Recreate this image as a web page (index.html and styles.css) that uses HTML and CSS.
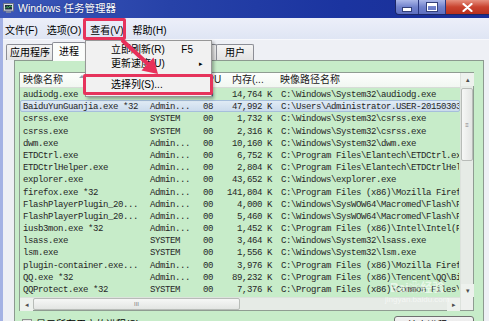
FILE: index.html
```html
<!DOCTYPE html>
<html lang="zh-CN">
<head>
    <meta charset="UTF-8">
    <meta name="viewport" content="width=device-width, initial-scale=1.0">
    <title>Windows 任务管理器</title>
    <link rel="stylesheet" href="styles.css">
</head>
<body>

<div class="window">
    <!-- Title bar -->
    <div class="titlebar">
        <svg class="app-icon" width="11" height="10" viewBox="0 0 11 10">
            <rect x="0.5" y="0.5" width="10" height="7.5" fill="#d9dde6" stroke="#6b7385"/>
            <rect x="2" y="2" width="7" height="4.5" fill="#1d2b3c"/>
            <polyline points="2,5.5 4,3.5 5.5,4.8 7,2.8 9,4" fill="none" stroke="#4fd45a" stroke-width="0.9"/>
            <rect x="3" y="8.3" width="5" height="1.5" fill="#8890a0"/>
        </svg>
        <span class="title">Windows 任务管理器</span>
        <div class="controls">
            <span class="ctl min"><i></i></span>
            <span class="ctl max"><i></i></span>
            <span class="ctl close">
                <svg width="11" height="9" viewBox="0 0 11 9">
                    <path d="M1.5 1 L9.5 8 M9.5 1 L1.5 8" stroke="#fff" stroke-width="2.2" stroke-linecap="round"/>
                </svg>
            </span>
        </div>
    </div>

    <div class="frame">
        <!-- Menu bar -->
        <div class="menubar">
            <span class="menu-item">文件(F)</span>
            <span class="menu-item">选项(O)</span>
            <span class="menu-item open">查看(V)</span>
            <span class="menu-item">帮助(H)</span>
        </div>

        <!-- Tabs -->
        <div class="tabs">
            <span class="tab">应用程序</span>
            <span class="tab active">进程</span>
            <span class="tab">服务</span>
            <span class="tab">性能</span>
            <span class="tab">联网</span>
            <span class="tab">用户</span>
        </div>

        <!-- Processes page -->
        <div class="page">
            <div class="list">
                <div class="list-main">
                    <div class="list-view">
                        <div class="row head">
                            <span class="c-name">映像名称<b class="sort"></b></span>
                            <span class="c-user">用户名</span>
                            <span class="c-cpu">CPU</span>
                            <span class="c-mem head-mem">内存(...</span>
                            <span class="c-path">映像路径名称</span>
                        </div>
                        <div class="row"><span class="c-name">audiodg.exe</span><span class="c-user">LOCAL...</span><span class="c-cpu">00</span><span class="c-mem">14,764 K</span><span class="c-path">C:\Windows\System32\audiodg.exe</span></div>
                        <div class="row selected"><span class="c-name">BaiduYunGuanjia.exe *32</span><span class="c-user">Admin...</span><span class="c-cpu">08</span><span class="c-mem">47,992 K</span><span class="c-path">C:\Users\Administrator.USER-20150303VQ\AppData</span></div>
                        <div class="row"><span class="c-name">csrss.exe</span><span class="c-user">SYSTEM</span><span class="c-cpu">00</span><span class="c-mem">1,732 K</span><span class="c-path">C:\Windows\System32\csrss.exe</span></div>
                        <div class="row"><span class="c-name">csrss.exe</span><span class="c-user">SYSTEM</span><span class="c-cpu">00</span><span class="c-mem">2,316 K</span><span class="c-path">C:\Windows\System32\csrss.exe</span></div>
                        <div class="row"><span class="c-name">dwm.exe</span><span class="c-user">Admin...</span><span class="c-cpu">00</span><span class="c-mem">10,160 K</span><span class="c-path">C:\Windows\System32\dwm.exe</span></div>
                        <div class="row"><span class="c-name">ETDCtrl.exe</span><span class="c-user">Admin...</span><span class="c-cpu">00</span><span class="c-mem">6,752 K</span><span class="c-path">C:\Program Files\Elantech\ETDCtrl.exe</span></div>
                        <div class="row"><span class="c-name">ETDCtrlHelper.exe</span><span class="c-user">Admin...</span><span class="c-cpu">00</span><span class="c-mem">2,804 K</span><span class="c-path">C:\Program Files\Elantech\ETDCtrlHelper.exe</span></div>
                        <div class="row"><span class="c-name">explorer.exe</span><span class="c-user">Admin...</span><span class="c-cpu">00</span><span class="c-mem">43,652 K</span><span class="c-path">C:\Windows\explorer.exe</span></div>
                        <div class="row"><span class="c-name">firefox.exe *32</span><span class="c-user">Admin...</span><span class="c-cpu">00</span><span class="c-mem">141,804 K</span><span class="c-path">C:\Program Files (x86)\Mozilla Firefox\firefox.exe</span></div>
                        <div class="row"><span class="c-name">FlashPlayerPlugin_20...</span><span class="c-user">Admin...</span><span class="c-cpu">00</span><span class="c-mem">4,000 K</span><span class="c-path">C:\Windows\SysWOW64\Macromed\Flash\FlashPlayerPlugin</span></div>
                        <div class="row"><span class="c-name">FlashPlayerPlugin_20...</span><span class="c-user">Admin...</span><span class="c-cpu">00</span><span class="c-mem">5,460 K</span><span class="c-path">C:\Windows\SysWOW64\Macromed\Flash\FlashPlayerPlugin</span></div>
                        <div class="row"><span class="c-name">iusb3mon.exe *32</span><span class="c-user">Admin...</span><span class="c-cpu">00</span><span class="c-mem">1,452 K</span><span class="c-path">C:\Program Files (x86)\Intel\Intel(R) USB 3.0</span></div>
                        <div class="row"><span class="c-name">lsass.exe</span><span class="c-user">SYSTEM</span><span class="c-cpu">00</span><span class="c-mem">3,464 K</span><span class="c-path">C:\Windows\System32\lsass.exe</span></div>
                        <div class="row"><span class="c-name">lsm.exe</span><span class="c-user">SYSTEM</span><span class="c-cpu">00</span><span class="c-mem">1,556 K</span><span class="c-path">C:\Windows\System32\lsm.exe</span></div>
                        <div class="row"><span class="c-name">plugin-container.exe...</span><span class="c-user">Admin...</span><span class="c-cpu">00</span><span class="c-mem">3,976 K</span><span class="c-path">C:\Program Files (x86)\Mozilla Firefox\plugin</span></div>
                        <div class="row"><span class="c-name">QQ.exe *32</span><span class="c-user">Admin...</span><span class="c-cpu">00</span><span class="c-mem">89,232 K</span><span class="c-path">C:\Program Files (x86)\Tencent\QQ\Bin\QQ.exe</span></div>
                        <div class="row"><span class="c-name">QQProtect.exe *32</span><span class="c-user">SYSTEM</span><span class="c-cpu">00</span><span class="c-mem">7,376 K</span><span class="c-path">C:\Program Files (x86)\Common Files\Tencent</span></div>
                    </div>
                    <div class="hscroll">
                        <span class="sb-btn">&#9666;</span>
                        <span class="h-thumb"><i>III</i></span>
                        <span class="h-track"></span>
                        <span class="sb-btn">&#9656;</span>
                    </div>
                </div>
                <div class="vscroll">
                    <span class="sb-btn">&#9652;</span>
                    <span class="v-thumb"><i>&#8801;</i></span>
                    <span class="v-track"></span>
                    <span class="sb-btn">&#9662;</span>
                    <span class="corner"></span>
                </div>
            </div>

            <div class="footer">
                <label class="check"><span class="box"></span>显示所有用户的进程(S)</label>
                <span class="end-btn">结束进程(E)</span>
            </div>
        </div>
    </div>

    <!-- Open "查看" menu -->
    <div class="dropdown">
        <div class="dd-item"><span>立即刷新(R)</span><span class="key">F5</span></div>
        <div class="dd-item"><span>更新速度(U)</span><span class="sub">&#9656;</span></div>
        <div class="dd-sep"></div>
        <div class="dd-item"><span>选择列(S)...</span></div>
    </div>

    <!-- red annotations -->
    <div class="mark mark-view"></div>
    <div class="mark mark-col"></div>
    <svg class="arrow" width="489" height="321" viewBox="0 0 489 321">
        <line x1="123" y1="41" x2="149" y2="65" stroke="#e8305a" stroke-width="4" stroke-linecap="round"/>
        <polygon points="158,74 141.5,70.5 153.5,57.5" fill="#e8305a"/>
    </svg>

    <div class="watermark">
        <span class="wm-logo">Bai<b>&#10048;</b>经验</span>
        <span class="wm-url">jingyan.baidu.com</span>
    </div>
</div>

</body>
</html>
```

FILE: styles.css
```css
* {
    box-sizing: border-box;
}

body {
    margin: 0;
    width: 489px;
    height: 321px;
    overflow: hidden;
    background: #eef0f5;
    font-family: "Liberation Sans", "Noto Sans CJK SC", sans-serif;
    font-size: 10px;
    color: #000;
}

.window {
    position: relative;
    width: 489px;
    height: 321px;
    overflow: hidden;
}

/* ---------- title bar ---------- */
.titlebar {
    height: 18px;
    display: flex;
    align-items: flex-start;
    background: linear-gradient(to right, #3b57b9 0%, #2742a8 35%, #1b34a0 70%, #1a2e96 100%);
    color: #fff;
}

.app-icon {
    margin: 3px 4px 0 3px;
    flex: none;
}

.title {
    font-size: 10.5px;
    line-height: 16px;
    text-shadow: 0 0 2px rgba(0, 0, 0, 0.4);
}

.controls {
    margin-left: auto;
    display: flex;
    height: 15px;
    border: 1px solid #1c2766;
    border-top: none;
    border-right: none;
    border-radius: 0 0 0 4px;
    overflow: hidden;
}

.ctl {
    display: flex;
    align-items: center;
    justify-content: center;
    height: 100%;
}

.ctl.min {
    width: 23px;
    background: linear-gradient(#aab6e8, #7182cc 50%, #5e6fc0);
    border-right: 1px solid #2a3780;
}

.ctl.min i {
    width: 8px;
    height: 3px;
    margin-top: 5px;
    background: #fff;
    border: 1px solid #33407a;
    box-sizing: content-box;
}

.ctl.max {
    width: 27px;
    background: linear-gradient(#aab6e8, #7182cc 50%, #5e6fc0);
    border-right: 1px solid #2a3780;
}

.ctl.max i {
    width: 10px;
    height: 8px;
    border: 1px solid #fff;
    border-top-width: 3px;
    outline: 1px solid #33407a;
}

.ctl.close {
    width: 43px;
    background: linear-gradient(#e6907f, #c9432f 50%, #b8301e);
}

/* ---------- frame below title ---------- */
.frame {
    border-left: 3px solid #a4b2e4;
    height: 303px;
}

.menubar {
    height: 22px;
    display: flex;
    align-items: center;
    padding: 2px 0 0 0;
    background: linear-gradient(#eceff9, #dfe5f4);
    border-bottom: 1px solid #f7f8fc;
}

.menu-item {
    padding: 0 4.5px;
    font-size: 10px;
}

.menu-item:first-child {
    margin-left: -2.5px;
}

.tabs {
    height: 20px;
    display: flex;
    align-items: flex-end;
    padding-left: 3px;
}

.tab {
    height: 16px;
    line-height: 15px;
    padding: 0 3px;
    margin-right: -1px;
    font-size: 10px;
    background: linear-gradient(#f4f4f4, #e2e2e2);
    border: 1px solid #8c8e96;
    border-bottom: none;
    border-radius: 2px 2px 0 0;
}

.tab.active {
    height: 19px;
    line-height: 17px;
    padding: 0 6px;
    margin: 0 1px -1px -1px;
    background: #fbfdfb;
    position: relative;
}

.tab:nth-child(3),
.tab:nth-child(4),
.tab:nth-child(5) {
    padding: 0 11px;
}

.tab:last-child {
    padding: 0 8px;
}

/* ---------- processes page ---------- */
.page {
    margin: 0 5px 0 11px;
    height: 263px;
    background: #c7ecc9;
    border: 1px solid #8c9a90;
    padding: 11px 9px 0 4px;
}

.list {
    display: flex;
    height: 239px;
    border: 1px solid #8f9c92;
}

.list-main {
    flex: 1;
    display: flex;
    flex-direction: column;
    min-width: 0;
}

.list-view {
    height: 224px;
    overflow: hidden;
}

.row {
    display: grid;
    grid-template-columns: 127px 53px 28px 46px 1fr;
    height: 12.2px;
    line-height: 12.2px;
    font-family: "Liberation Mono", monospace;
    font-size: 9px;
    letter-spacing: -0.4px;
    color: #262626;
    white-space: nowrap;
    border: 1px solid transparent;
}

.row span {
    overflow: hidden;
}

.row .c-name {
    padding-left: 2px;
}

.row .c-user {
    padding-left: 2px;
}

.row .c-cpu {
    padding-left: 2px;
}

.row .c-mem {
    display: flex;
    justify-content: flex-end;
    padding-right: 3px;
    overflow: visible;
}

.row .c-path {
    padding-left: 6px;
}

.row.selected {
    background: linear-gradient(#e0ebf5, #cbdbec);
    border-color: #a6bfdb;
    border-radius: 2px;
}

.row.head {
    height: 15px;
    line-height: 14px;
    font-family: "Liberation Sans", "Noto Sans CJK SC", sans-serif;
    font-size: 10px;
    letter-spacing: 0;
    color: #1a1a1a;
    background: linear-gradient(#fdfefd, #f1f7f1);
    border: none;
    border-bottom: 1px solid #d7dcd7;
}

.row.head .c-name {
    position: relative;
    padding-left: 3px;
}

.row.head .c-cpu {
    padding-left: 0;
}

.row.head .head-mem {
    justify-content: flex-start;
    padding-left: 4px;
}

.sort {
    position: absolute;
    left: 59px;
    top: 2px;
    width: 0;
    height: 0;
    border-left: 3px solid transparent;
    border-right: 3px solid transparent;
    border-bottom: 3px solid #97a3b3;
}

/* scrollbars */
.sb-btn {
    flex: none;
    width: 13px;
    height: 13px;
    display: flex;
    align-items: center;
    justify-content: center;
    font-size: 7px;
    color: #4d4d4d;
    background: #edf1ed;
}

.hscroll {
    display: flex;
    height: 13px;
    background: #e6ebe6;
    border-top: 1px solid #dde2dd;
}

.h-thumb {
    width: 207px;
    display: flex;
    align-items: center;
    justify-content: center;
    background: linear-gradient(#f6f7f6, #e3e5e3);
    border: 1px solid #b8bcb8;
    border-radius: 2px;
}

.h-thumb i,
.v-thumb i {
    font-style: normal;
    font-size: 6px;
    color: #7c7c7c;
}

.h-track {
    flex: 1;
}

.vscroll {
    width: 13px;
    display: flex;
    flex-direction: column;
    background: #e6ebe6;
    border-left: 1px solid #dde2dd;
}

.v-thumb {
    height: 73px;
    margin-top: 2px;
    display: flex;
    align-items: center;
    justify-content: center;
    background: linear-gradient(to right, #f6f7f6, #e3e5e3);
    border: 1px solid #b8bcb8;
    border-radius: 2px;
}

.v-track {
    flex: 1;
}

.corner {
    height: 13px;
    background: #eef0ee;
}

.footer {
    display: flex;
    align-items: flex-start;
    justify-content: space-between;
    margin-top: 5px;
    padding-left: 3px;
}

.check {
    display: flex;
    align-items: center;
    gap: 4px;
    font-size: 10px;
}

.box {
    width: 10px;
    height: 10px;
    border: 1px solid #8e8f8f;
    background: linear-gradient(#e7e7e7, #fbfbfb);
}

.end-btn {
    width: 80px;
    height: 20px;
    text-align: center;
    line-height: 18px;
    border: 1px solid #707070;
    border-radius: 3px;
    background: linear-gradient(#f2f2f2, #dddddd);
}

/* ---------- open menu ---------- */
.dropdown {
    position: absolute;
    left: 85px;
    top: 40px;
    width: 127px;
    height: 57px;
    padding: 2px 2px;
    background: #f1f1f1;
    border: 1px solid #979797;
    box-shadow: 2px 2px 3px rgba(0, 0, 0, 0.3);
    font-size: 10px;
}

.dd-item {
    height: 14px;
    line-height: 14px;
    display: flex;
    justify-content: space-between;
    padding: 0 6px 0 23px;
}

.dd-item .key {
    padding-right: 10px;
}

.dd-item .sub {
    font-size: 7px;
}

.dd-sep {
    height: 1px;
    margin: 3px 2px 3px 24px;
    background: #d7d7d7;
    border-bottom: 1px solid #fff;
}

.mark {
    position: absolute;
    border: 3px solid #e6335c;
    border-radius: 2px;
}

.mark-view {
    left: 83px;
    top: 18px;
    width: 43px;
    height: 22px;
}

.mark-col {
    left: 83px;
    top: 74px;
    width: 130px;
    height: 21px;
}

.arrow {
    position: absolute;
    left: 0;
    top: 0;
    pointer-events: none;
}

.watermark {
    position: absolute;
    left: 385px;
    top: 282px;
    display: flex;
    flex-direction: column;
    align-items: center;
    color: rgba(255, 255, 255, 0.6);
    pointer-events: none;
}

.wm-logo {
    font-size: 12px;
    font-weight: bold;
    line-height: 13px;
}

.wm-url {
    font-size: 8px;
    line-height: 9px;
}
```
